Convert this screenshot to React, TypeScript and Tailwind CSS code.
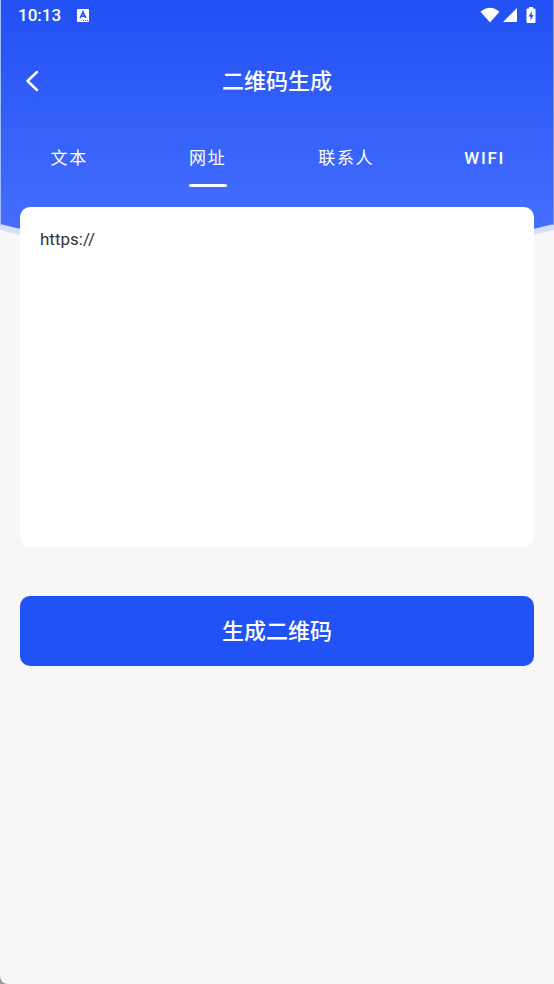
import React, { useState } from 'react';
import { clsx } from 'clsx';

const tabs = [
  { id: 'text', label: '文本', initial: '' },
  { id: 'url', label: '网址', initial: 'https://' },
  { id: 'contact', label: '联系人', initial: '' },
  { id: 'wifi', label: 'WIFI', initial: '' },
];

const StatusBar = () => (
  <div className="flex h-[30px] items-center justify-between px-[18px] text-white">
    <div className="flex items-center gap-4">
      <span className="text-[17px] leading-5 font-medium">10:13</span>
      <svg viewBox="0 0 12 13" className="h-[13px] w-3">
        <rect width="12" height="13" rx="1" fill="#fff" />
        <path d="M3.2 9 6 3l2.800 6M4.300 7.200h3.400" fill="none" stroke="#2453f5" strokeWidth="1.700" />
        <path d="M6 11.500h1M8 11.500h1M10 11.500h1" stroke="#2453f5" strokeWidth="1" />
      </svg>
    </div>
    <div className="flex items-center">
      <svg viewBox="0 0 20 16" className="h-4 w-5" fill="#fff">
        <path d="M.5 4.800Q10-3.200 19.500 4.800L10 15.500Z" />
      </svg>
      <svg viewBox="0 0 14 14" className="ml-[3px] h-[14px] w-[14px]" fill="#fff">
        <path d="M14 0v14H0Z" />
      </svg>
      <svg viewBox="0 0 10 16" className="ml-[9px] h-4 w-[10px]">
        <path d="M3 0h4v1.500h1.500q1 0 1 1V15q0 1-1 1h-7q-1 0-1-1V2.500q0-1 1-1H3Z" fill="#fff" />
        <path d="M6 4 2.500 9.500h2v4L7.500 8h-2Z" fill="#2453f5" />
      </svg>
    </div>
  </div>
);

const HeaderBackground = () => (
  <svg
    viewBox="0 0 554 260"
    preserveAspectRatio="none"
    aria-hidden="true"
    className="absolute inset-x-0 top-0 h-[260px] w-full"
  >
    <defs>
      <linearGradient id="header-blue" x1="0" y1="0" x2="0" y2="1">
        <stop offset="0" stopColor="#2150f4" />
        <stop offset="1" stopColor="#4a72ff" />
      </linearGradient>
    </defs>
    <path d="M0 0H554V230Q277 300 0 230Z" fill="#d5dffd" />
    <path d="M0 0H554V224Q277 294 0 224Z" fill="url(#header-blue)" />
    <path d="M0 0H1V225H0Z" fill="#a5bdfa" />
    <path d="M553 0H554V225H553Z" fill="#7d95dc" />
  </svg>
);

export default function App() {
  const [active, setActive] = useState('url');
  const [values, setValues] = useState<Record<string, string>>(
    Object.fromEntries(tabs.map(t => [t.id, t.initial]))
  );

  return (
    <div className="bg-[#9a9a9a]">
      <div className="relative min-h-screen rounded-bl-lg bg-[#f7f7f7] font-[Roboto,'Noto_Sans_CJK_SC',sans-serif]">
        <HeaderBackground />

        <div className="relative">
          <StatusBar />

          <header className="grid h-[102px] grid-cols-[64px_1fr_64px] items-center text-white">
            <button type="button" aria-label="返回" className="flex h-11 w-16 items-center justify-center">
              <svg viewBox="0 0 14 22" className="h-[22px] w-[14px]" fill="none" stroke="#fff" strokeWidth="2.500">
                <path d="M12 2 2.500 11 12 20" strokeLinecap="round" strokeLinejoin="round" />
              </svg>
            </button>
            <h1 className="pt-[2px] text-center text-[22px] leading-8 font-medium">二维码生成</h1>
          </header>

          <nav className="grid grid-cols-4">
            {tabs.map(tab => (
              <button
                key={tab.id}
                type="button"
                onClick={() => setActive(tab.id)}
                className="flex h-[55px] flex-col items-center justify-between pt-[14px] text-[17px] leading-6 text-white"
              >
                <span className={clsx('tracking-widest', tab.id === 'wifi' && 'font-medium')}>{tab.label}</span>
                <span className={clsx('h-[3px] w-[38px] rounded-full', active === tab.id && 'bg-white')} />
              </button>
            ))}
          </nav>

          <main className="px-5 pt-5">
            <textarea
              aria-label="二维码内容"
              value={values[active]}
              onChange={e => setValues({ ...values, [active]: e.target.value })}
              className="block h-[340px] w-full resize-none rounded-[10px] bg-white p-5 text-[17px] leading-6 text-[#333] outline-none"
            />
            <button
              type="button"
              className="mt-[49px] h-[70px] w-full rounded-[10px] bg-[#2152f5] text-[22px] font-medium text-white"
            >
              生成二维码
            </button>
          </main>
        </div>
      </div>
    </div>
  );
}
